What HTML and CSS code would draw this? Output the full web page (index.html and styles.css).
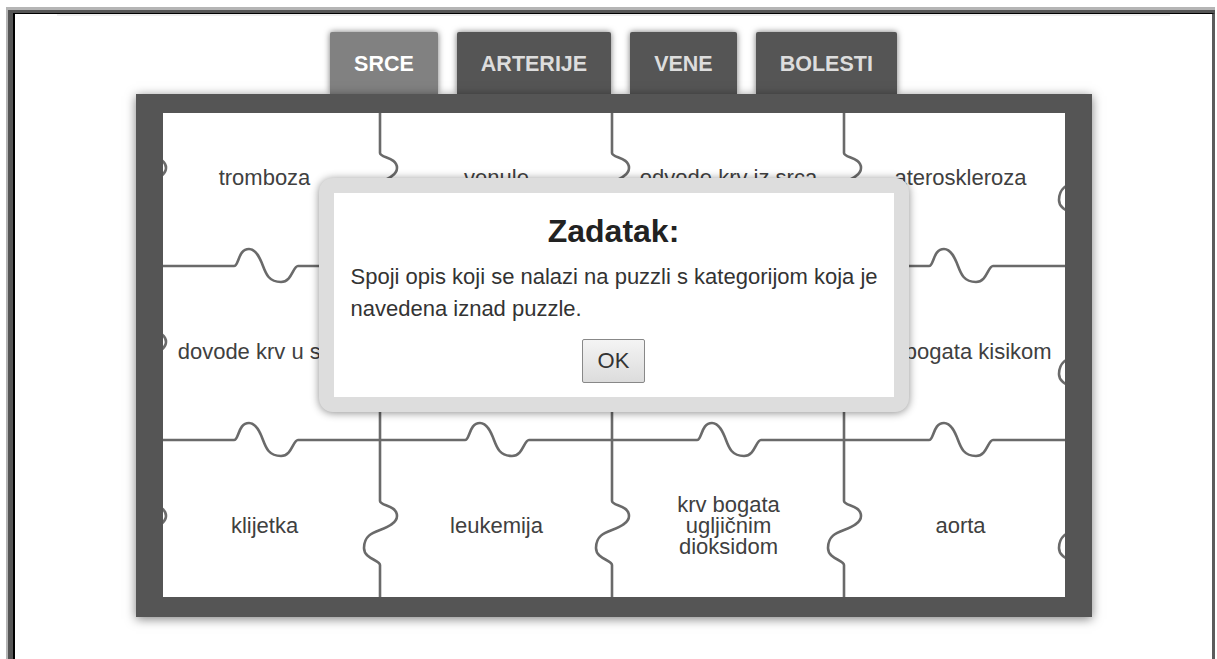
FILE: index.html
```html
<!DOCTYPE html>
<html>
<head>
    <meta charset="utf-8">
    <title>Krvožilni sustav - puzzle</title>
    <link rel="stylesheet" href="styles.css">
</head>
<body>
    <div class="window">
        <div class="frame">
            <div class="screen">
                <div class="rule"></div>
                <div class="tabs">
                    <div class="tab active">SRCE</div>
                    <div class="tab">ARTERIJE</div>
                    <div class="tab">VENE</div>
                    <div class="tab">BOLESTI</div>
                </div>
                <div class="board">
                    <div class="pieces">
                        <div class="grid">
                            <div class="piece"><span>tromboza</span></div>
                            <div class="piece"><span>venule</span></div>
                            <div class="piece"><span>odvode krv iz srca</span></div>
                            <div class="piece"><span>ateroskleroza</span></div>
                            <div class="piece"><span>dovode krv u srce</span></div>
                            <div class="piece"><span>kapilare</span></div>
                            <div class="piece"><span>infarkt</span></div>
                            <div class="piece"><span>krv bogata kisikom</span></div>
                            <div class="piece"><span>klijetka</span></div>
                            <div class="piece"><span>leukemija</span></div>
                            <div class="piece"><span>krv bogata ugljičnim dioksidom</span></div>
                            <div class="piece"><span>aorta</span></div>
                        </div>
                        <!-- puzzle cut lines, drawn over the pieces -->
                        <svg class="cuts" width="902" height="484" viewBox="0 0 902 484">
                            <path d="M-14,-21 v61 c0,5 17,4 17,15 c0,7 -9,11 -17,14 c-8,3 -16,6 -16,18 c0,11 16,12 16,17 v49 v61 c0,5 17,4 17,15 c0,7 -9,11 -17,14 c-8,3 -16,6 -16,18 c0,11 16,12 16,17 v49 v61 c0,5 17,4 17,15 c0,7 -9,11 -17,14 c-8,3 -16,6 -16,18 c0,11 16,12 16,17 v49"/>
                            <path d="M217,-21 v61 c0,5 17,4 17,15 c0,7 -9,11 -17,14 c-8,3 -16,6 -16,18 c0,11 16,12 16,17 v49 v61 c0,5 17,4 17,15 c0,7 -9,11 -17,14 c-8,3 -16,6 -16,18 c0,11 16,12 16,17 v49 v61 c0,5 17,4 17,15 c0,7 -9,11 -17,14 c-8,3 -16,6 -16,18 c0,11 16,12 16,17 v49"/>
                            <path d="M449,-21 v61 c0,5 17,4 17,15 c0,7 -9,11 -17,14 c-8,3 -16,6 -16,18 c0,11 16,12 16,17 v49 v61 c0,5 17,4 17,15 c0,7 -9,11 -17,14 c-8,3 -16,6 -16,18 c0,11 16,12 16,17 v49 v61 c0,5 17,4 17,15 c0,7 -9,11 -17,14 c-8,3 -16,6 -16,18 c0,11 16,12 16,17 v49"/>
                            <path d="M681,-21 v61 c0,5 17,4 17,15 c0,7 -9,11 -17,14 c-8,3 -16,6 -16,18 c0,11 16,12 16,17 v49 v61 c0,5 17,4 17,15 c0,7 -9,11 -17,14 c-8,3 -16,6 -16,18 c0,11 16,12 16,17 v49 v61 c0,5 17,4 17,15 c0,7 -9,11 -17,14 c-8,3 -16,6 -16,18 c0,11 16,12 16,17 v49"/>
                            <path d="M912,-21 v61 c0,5 17,4 17,15 c0,7 -9,11 -17,14 c-8,3 -16,6 -16,18 c0,11 16,12 16,17 v49 v61 c0,5 17,4 17,15 c0,7 -9,11 -17,14 c-8,3 -16,6 -16,18 c0,11 16,12 16,17 v49 v61 c0,5 17,4 17,15 c0,7 -9,11 -17,14 c-8,3 -16,6 -16,18 c0,11 16,12 16,17 v49"/>
                            <path d="M-14,153 h85 c5,0 4,-17 15,-17 c7,0 11,9 14,17 c3,8 6,16 18,16 c11,0 12,-16 17,-16 h82 h85 c5,0 4,-17 15,-17 c7,0 11,9 14,17 c3,8 6,16 18,16 c11,0 12,-16 17,-16 h83 h85 c5,0 4,-17 15,-17 c7,0 11,9 14,17 c3,8 6,16 18,16 c11,0 12,-16 17,-16 h83 h85 c5,0 4,-17 15,-17 c7,0 11,9 14,17 c3,8 6,16 18,16 c11,0 12,-16 17,-16 h82 h85 c5,0 4,-17 15,-17 c7,0 11,9 14,17 c3,8 6,16 18,16 c11,0 12,-16 17,-16 h83"/>
                            <path d="M-14,327 h85 c5,0 4,-17 15,-17 c7,0 11,9 14,17 c3,8 6,16 18,16 c11,0 12,-16 17,-16 h82 h85 c5,0 4,-17 15,-17 c7,0 11,9 14,17 c3,8 6,16 18,16 c11,0 12,-16 17,-16 h83 h85 c5,0 4,-17 15,-17 c7,0 11,9 14,17 c3,8 6,16 18,16 c11,0 12,-16 17,-16 h83 h85 c5,0 4,-17 15,-17 c7,0 11,9 14,17 c3,8 6,16 18,16 c11,0 12,-16 17,-16 h82 h85 c5,0 4,-17 15,-17 c7,0 11,9 14,17 c3,8 6,16 18,16 c11,0 12,-16 17,-16 h83"/>
                        </svg>
                    </div>
                    <div class="dialog">
                        <h2>Zadatak:</h2>
                        <p>Spoji opis koji se nalazi na puzzli s kategorijom koja je navedena iznad puzzle.</p>
                        <button type="button">OK</button>
                    </div>
                </div>
            </div>
        </div>
    </div>
</body>
</html>
```

FILE: styles.css
```css
body {
    margin: 0;
    font-family: "Liberation Sans", Arial, sans-serif;
    background-color: #fff;
}

/* window frame around the page */
.window {
    margin: 7px 2px 0 6px;
    border-top: 3px solid #b5b5b5;
    border-left: 2px solid #b5b5b5;
}

.frame {
    border-top: 3px solid #555;
    border-left: 5px solid #555;
}

.screen {
    height: 660px;
    border-top: 1px solid #000;
    border-left: 2px solid #000;
    border-right: 3px solid #5c5c5c;
    background-color: #fff;
}

.rule {
    height: 2px;
    margin: 0 42px;
    background-color: #eee;
}

/* category tabs */
.tabs {
    display: flex;
    justify-content: center;
    gap: 19px;
    margin-top: 16px;
}

.tab {
    display: flex;
    align-items: center;
    height: 60px;
    padding: 2px 24px 0;
    background-color: #555;
    color: #ddd;
    font-size: 21.5px;
    font-weight: bold;
    border-radius: 2px 2px 0 0;
    box-shadow: 0 0 6px rgba(0, 0, 0, 0.55);
}

.tab.active {
    background-color: #818181;
    color: #fff;
}

/* puzzle board */
.board {
    position: relative;
    width: 902px;
    margin: 0 auto;
    border-style: solid;
    border-color: #555;
    border-width: 19px 27px 20px;
    box-shadow: 0 2px 10px rgba(0, 0, 0, 0.5);
}

.pieces {
    position: relative;
    height: 484px;
    overflow: hidden;
    background-color: #fff;
}

.grid {
    display: grid;
    grid-template-columns: repeat(4, 232px);
    grid-template-rows: repeat(3, 174px);
    margin: -21px 0 0 -14px;
}

.piece {
    display: flex;
    align-items: center;
    justify-content: center;
    padding-bottom: 4px;
    text-align: center;
    font-size: 22px;
    line-height: 21px;
    color: #404040;
}

.piece span {
    max-width: 188px;
}

.cuts {
    position: absolute;
    top: 0;
    left: 0;
}

.cuts path {
    fill: none;
    stroke: #6a6a6a;
    stroke-width: 2.6;
    stroke-linejoin: round;
}

/* task dialog */
.dialog {
    position: absolute;
    top: 65px;
    left: 156px;
    box-sizing: border-box;
    width: 590px;
    padding: 18px 17px 14px;
    border: 15px solid #ddd;
    border-radius: 14px;
    background-color: #fff;
    box-shadow: 0 1px 8px rgba(0, 0, 0, 0.45);
    text-align: center;
}

.dialog h2 {
    margin: 0;
    font-size: 32px;
    line-height: 40px;
    color: #222;
}

.dialog p {
    margin: 10px -8px 0 0;
    font-size: 22px;
    line-height: 32px;
    text-align: left;
    color: #333;
}

.dialog button {
    display: block;
    width: 63px;
    height: 44px;
    margin: 14px auto 0;
    padding: 0;
    font-family: "Liberation Sans", Arial, sans-serif;
    font-size: 22px;
    color: #333;
    background: linear-gradient(#f4f4f4, #dcdcdc);
    border: 1px solid #888;
    border-radius: 2px;
}
```
